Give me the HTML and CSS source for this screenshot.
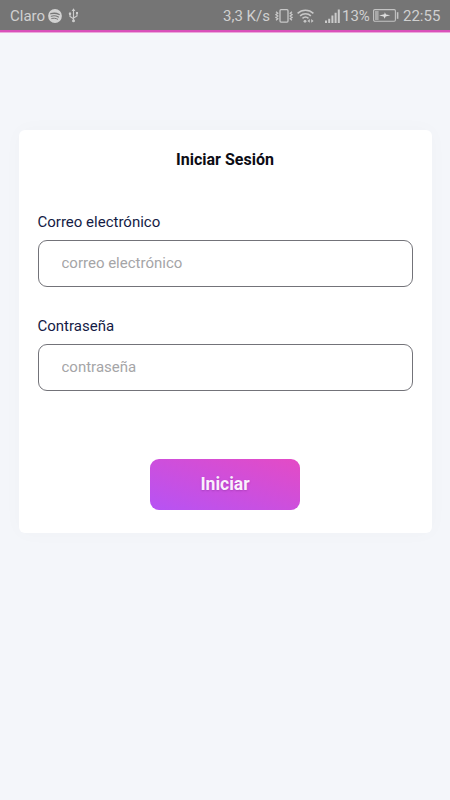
FILE: index.html
```html
<!DOCTYPE html>
<html lang="es">
<head>
<meta charset="utf-8">
<title>Iniciar Sesión</title>
<link rel="stylesheet" href="styles.css">
</head>
<body>
<header class="status">
  <div class="status-left">
    <span class="carrier">Claro</span>
    <svg class="spotify" width="14" height="14" viewBox="0 0 14 14"><circle cx="7" cy="7" r="6.9" fill="#d2d2d2"/><g fill="none" stroke="#777" stroke-linecap="round"><path d="M2.9 4.7C5.5 3.9 8.8 4.2 11.2 5.5" stroke-width="1.4"/><path d="M3.3 7.2C5.5 6.5 8.3 6.8 10.4 8" stroke-width="1.2"/><path d="M3.7 9.5C5.5 8.9 7.9 9.2 9.6 10.2" stroke-width="1"/></g></svg>
    <svg class="usb" width="11" height="15" viewBox="0 0 11 15" fill="none" stroke="#cdcdcd" stroke-width="1.1"><path d="M5.5 2.5V12M5.5 10.7L2 8.4V6M5.5 10L9 8V5.5"/><path d="M5.5 .2L7.3 3H3.7ZM1 4.7h2v2H1ZM8 4h2v2H8Z" fill="#cdcdcd" stroke="none"/><circle cx="2" cy="5.7" r="1.2" fill="#cdcdcd" stroke="none"/><circle cx="5.5" cy="12.7" r="1.5" fill="#cdcdcd" stroke="none"/></svg>
  </div>
  <div class="status-right">
    <span class="speed">3,3 K/s</span>
    <svg class="vibrate" width="18" height="14" viewBox="0 0 18 14" fill="none" stroke="#c8c8c8" stroke-width="1.3"><rect x="5" y=".7" width="8" height="12.4" rx="1"/><path d="M1 2.8L2.8 4.2L1 5.6L2.8 7L1 8.4L2.8 9.8L1 11.2M17 2.8L15.2 4.2L17 5.6L15.2 7L17 8.4L15.2 9.8L17 11.2"/></svg>
    <svg class="wifi" width="17" height="14" viewBox="0 0 17 14" fill="none" stroke="#c8c8c8" stroke-width="1.5"><path d="M.6 4.4C5 .1 12 .1 16.4 4.4M3.1 6.9C6.2 4 10.8 4 13.9 6.9M5.5 9.4C7.3 7.8 9.7 7.8 11.5 9.4"/><circle cx="8" cy="12.3" r="1.4" fill="#c8c8c8" stroke="none"/><path d="M10.4 11.9l2.4-1.8v3.6ZM16.6 11.9l-2.4-1.8v3.6Z" fill="#c8c8c8" stroke="none"/></svg>
    <svg class="signal" width="15" height="14" viewBox="0 0 15 14" fill="#cbcbcb"><path d="M0 11.5h2V14H0ZM3.2 9.7h2V14h-2ZM6.4 6.6h2V14h-2ZM9.6 3.7h2V14h-2ZM12.8.5h2V14h-2Z"/></svg>
    <span class="percent">13%</span>
    <svg class="battery" width="26" height="13" viewBox="0 0 26 13"><rect x=".6" y=".6" width="21.8" height="11.6" rx="1.2" fill="none" stroke="#c3c3c3" stroke-width="1.1"/><path d="M2 2h3.6v9H2Z" fill="#a9a9a9"/><path d="M6 6.6L11.3 5.3L11.8 3.3L13 5.4L17.3 6.3L12.6 7.6L11.7 9.8L10.6 7.6Z" fill="#dedede"/><path d="M23.8 3.2h1.6v6.6h-1.6Z" fill="#c3c3c3"/></svg>
    <span class="clock">22:55</span>
  </div>
</header>
<main class="card">
  <h1 class="title">Iniciar Sesión</h1>
  <form class="form">
    <label class="label" for="email">Correo electrónico</label>
    <input class="input" id="email" type="email" placeholder="correo electrónico">
    <label class="label" for="password">Contraseña</label>
    <input class="input" id="password" type="password" placeholder="contraseña">
    <button class="submit" type="button">Iniciar</button>
  </form>
</main>
</body>
</html>
```
FILE: styles.css
```css
* { box-sizing: border-box; }
body {
  margin: 0;
  min-height: 800px;
  background: #f4f6fa;
  font-family: Roboto, sans-serif;
}
.status {
  display: flex;
  justify-content: space-between;
  height: 32px;
  padding: 0 10px;
  background: #757575;
  border-bottom: 2px solid #d950b9;
  box-shadow: 0 1px #eba9dc;
  color: #d0d0d0;
  font-size: 15px;
  line-height: 18px;
}
.status-left,
.status-right {
  display: flex;
  align-items: center;
  height: 31px;
  white-space: nowrap;
}
.status svg { display: block; flex: none; }
.carrier { width: 35px; }
.spotify { margin-left: 3px; }
.usb { margin-left: 6px; }
.speed { width: 47px; }
.vibrate { margin-left: 5px; }
.wifi { margin-left: 4px; }
.signal { margin-left: 11px; }
.percent { width: 28px; margin-left: 2px; }
.battery { margin-left: 3px; }
.clock { width: 37px; margin-left: 4px; }
.card {
  width: 413px;
  height: 403.5px;
  margin: 97.5px auto 0;
  padding: 20px 19px 0;
  background: #fff;
  border-radius: 6px;
  box-shadow: 0 0 20px rgba(40, 50, 90, .025);
}
.title {
  margin: 0;
  color: #0c0c14;
  font-size: 16px;
  font-weight: 700;
  line-height: 20px;
  text-align: center;
}
.form { display: flex; flex-direction: column; margin-top: 41px; }
.label {
  height: 29px;
  color: #141b45;
  font-size: 15px;
  line-height: 22px;
}
.input {
  width: 375px;
  height: 47px;
  margin: 0 0 28px;
  padding: 0 23px;
  border: 1px solid #737379;
  border-radius: 9px;
  background: #fff;
  color: #222;
  font: 15px/20px Roboto, sans-serif;
}
.input::placeholder { color: #a5a5a7; opacity: 1; }
.submit {
  align-self: center;
  width: 150px;
  height: 51px;
  margin-top: 40px;
  padding: 0;
  border: 0;
  border-radius: 9px;
  background: linear-gradient(to top right, #b653f4, #e44bc5);
  color: #faf0fc;
  font: 700 17.5px/22px Roboto, sans-serif;
  text-shadow: 0 1px 2px rgba(80, 20, 100, .25);
}
```
